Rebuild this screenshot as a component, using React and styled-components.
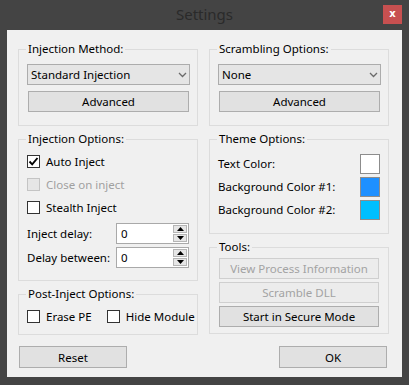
import styled, { createGlobalStyle } from 'styled-components';

const GlobalStyle = createGlobalStyle`
  html, body {
    margin: 0;
    padding: 0;
    background: #444444;
  }
  body {
    font-family: "Noto Sans", "Liberation Sans", sans-serif;
    font-size: 11.5px;
    color: #000;
  }
  * { box-sizing: border-box; }
`;

const Frame = styled.div`
  width: 409px;
  height: 385px;
  background: #444444;
  display: flex;
  flex-direction: column;
  padding: 0 7px 8px 7px;
`;

const TitleBar = styled.div`
  height: 30px;
  display: grid;
  grid-template-columns: 1fr auto 1fr;
  align-items: start;
`;

const Title = styled.div`
  grid-column: 2;
  font-size: 15px;
  line-height: 28px;
  color: #2a2a2a;
`;

const CloseButton = styled.div`
  grid-column: 3;
  justify-self: end;
  margin-top: 5px;
  width: 19px;
  height: 19px;
  background: #c75050;
  color: #fff;
  font-family: "DejaVu Sans", sans-serif;
  font-weight: bold;
  font-size: 10px;
  line-height: 18px;
  text-align: center;
`;

const Client = styled.div`
  flex: 1;
  background: #f0f0f0;
  padding: 11px 13px 0 11px;
`;

const Columns = styled.div`
  display: grid;
  grid-template-columns: 180px 180px;
  column-gap: 11px;
  align-items: start;
`;

const Column = styled.div`
  display: flex;
  flex-direction: column;
  gap: 5px;
`;

const Group = styled.fieldset`
  margin: 0;
  min-width: 0;
  border: 1px solid #dcdcdc;
  padding: ${p => p.$pad || '3px 7px 6px 8px'};
  display: flex;
  flex-direction: column;
  gap: ${p => p.$gap || 0}px;
`;

const Legend = styled.legend`
  padding: 0 2px;
  margin-left: -1px;
  line-height: 16px;
  height: 16px;
`;

const Combo = styled.div`
  height: 21px;
  border: 1px solid #acacac;
  background: #e5e5e5;
  display: flex;
  align-items: center;
  justify-content: space-between;
  padding: 0 2px 0 3px;
  line-height: 19px;
`;

const Button = styled.div`
  height: ${p => p.$h || 21}px;
  width: ${p => (p.$w ? `${p.$w}px` : 'auto')};
  margin: 0 1px;
  border: 1px solid ${p => (p.$disabled ? '#cfcfcf' : '#adadad')};
  background: ${p => (p.$disabled ? '#ececec' : '#e1e1e1')};
  color: ${p => (p.$disabled ? '#a3a3a3' : '#000')};
  display: flex;
  align-items: center;
  justify-content: center;
  white-space: nowrap;
`;

const Row = styled.div`
  height: ${p => p.$h || 23}px;
  display: flex;
  align-items: center;
  justify-content: ${p => (p.$spread ? 'space-between' : 'flex-start')};
  gap: ${p => p.$gap || 0}px;
  white-space: nowrap;
`;

const CheckItem = styled.div`
  display: flex;
  align-items: center;
  gap: 6px;
  flex-shrink: 0;
  color: ${p => (p.$disabled ? '#a0a0a0' : '#000')};
`;

const Box = styled.span`
  flex-shrink: 0;
  width: 13px;
  height: 13px;
  border: 1px solid ${p => (p.$disabled ? '#c4c4c4' : '#333')};
  background: ${p => (p.$disabled ? '#e6e6e6' : '#fff')};
  display: flex;
  align-items: center;
  justify-content: center;
`;

const SpinRow = styled.div`
  height: 21px;
  display: grid;
  grid-template-columns: 89px 73px;
  align-items: center;
  white-space: nowrap;
`;

const Spinner = styled.div`
  height: 21px;
  border: 1px solid #a9a9a9;
  background: #fff;
  display: flex;
  padding: 1px;
`;

const SpinValue = styled.div`
  flex: 1;
  padding-left: 3px;
  line-height: 17px;
`;

const SpinButtons = styled.div`
  width: 14px;
  display: flex;
  flex-direction: column;
  gap: 1px;
`;

const SpinArrow = styled.div`
  flex: 1;
  background: #e6e6e6;
  border: 1px solid #b5b5b5;
  display: flex;
  align-items: center;
  justify-content: center;
`;

const Swatch = styled.span`
  width: 20px;
  height: 20px;
  border: 1px solid #8c8c8c;
  background: ${p => p.$color};
`;

const Footer = styled.div`
  margin-top: 11px;
  display: flex;
  justify-content: space-between;
  padding-right: 1px;
`;

const Chevron = () => (
  <svg width="9" height="6" viewBox="0 0 9 6">
    <polyline points="1,1 4.5,4.5 8,1" fill="none" stroke="#6a6a6a" strokeWidth="1.3" />
  </svg>
);

const Check = () => (
  <svg width="11" height="11" viewBox="0 0 11 11">
    <polyline points="1.5,5.5 4.2,8.3 9.5,2" fill="none" stroke="#000" strokeWidth="1.9" />
  </svg>
);

const Arrow = ({ up }) => (
  <svg width="7" height="4" viewBox="0 0 7 4">
    <polygon points={up ? '0,4 7,4 3.5,0' : '0,0 7,0 3.5,4'} fill="#000" />
  </svg>
);

function CheckBox({ label, checked, disabled }) {
  return (
    <CheckItem $disabled={disabled}>
      <Box $disabled={disabled}>{checked && <Check />}</Box>
      {label}
    </CheckItem>
  );
}

function SpinField({ label, value }) {
  return (
    <SpinRow>
      <span>{label}</span>
      <Spinner>
        <SpinValue>{value}</SpinValue>
        <SpinButtons>
          <SpinArrow><Arrow up /></SpinArrow>
          <SpinArrow><Arrow /></SpinArrow>
        </SpinButtons>
      </Spinner>
    </SpinRow>
  );
}

const themeColors = [
  { label: 'Text Color:', color: '#ffffff' },
  { label: 'Background Color #1:', color: '#1e90ff' },
  { label: 'Background Color #2:', color: '#00bfff' },
];

export default function App() {
  return (
    <>
      <GlobalStyle />
      <Frame>
        <TitleBar>
          <Title>Settings</Title>
          <CloseButton>x</CloseButton>
        </TitleBar>
        <Client>
          <Columns>
            <Column>
              <Group $pad="7px 7px 13px 8px" $gap={6}>
                <Legend>Injection Method:</Legend>
                <Combo>
                  <span>Standard Injection</span>
                  <Chevron />
                </Combo>
                <Button>Advanced</Button>
              </Group>

              <Group $pad="3px 7px 12px 8px">
                <Legend>Injection Options:</Legend>
                <Row><CheckBox label="Auto Inject" checked /></Row>
                <Row><CheckBox label="Close on inject" disabled /></Row>
                <Row><CheckBox label="Stealth Inject" /></Row>
                <div style={{ height: 4 }} />
                <SpinField label="Inject delay:" value="0" />
                <div style={{ height: 3 }} />
                <SpinField label="Delay between:" value="0" />
              </Group>

              <Group $pad="3px 7px 6px 8px">
                <Legend>Post-Inject Options:</Legend>
                <Row $gap={15}>
                  <CheckBox label="Erase PE" />
                  <CheckBox label="Hide Module" />
                </Row>
              </Group>
            </Column>

            <Column>
              <Group $pad="7px 7px 13px 8px" $gap={6}>
                <Legend>Scrambling Options:</Legend>
                <Combo>
                  <span>None</span>
                  <Chevron />
                </Combo>
                <Button>Advanced</Button>
              </Group>

              <Group $pad="5px 8px 12px 8px">
                <Legend>Theme Options:</Legend>
                {themeColors.map(t => (
                  <Row key={t.label} $spread>
                    <span>{t.label}</span>
                    <Swatch $color={t.color} />
                  </Row>
                ))}
              </Group>

              <Group $pad="3px 8px 6px 8px" $gap={3}>
                <Legend>Tools:</Legend>
                <Button $disabled>View Process Information</Button>
                <Button $disabled>Scramble DLL</Button>
                <Button>Start in Secure Mode</Button>
              </Group>
            </Column>
          </Columns>

          <Footer>
            <Button $w={108} $h={22}>Reset</Button>
            <Button $w={108} $h={22}>OK</Button>
          </Footer>
        </Client>
      </Frame>
    </>
  );
}
